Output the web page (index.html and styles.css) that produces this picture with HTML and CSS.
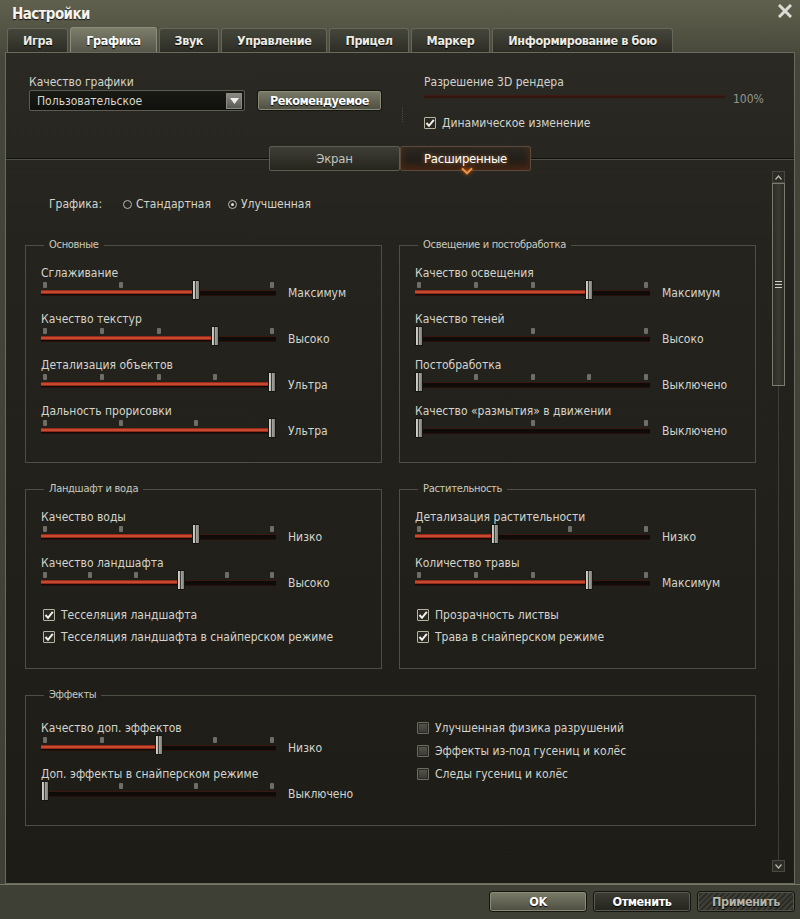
FILE: index.html
```html
<!DOCTYPE html>
<html lang="ru">
<head>
    <meta charset="UTF-8">
    <title>Настройки</title>
    <link rel="stylesheet" href="styles.css">
</head>
<body>
<div class="window">
    <header class="titlebar">
        <h1>Настройки</h1>
        <button class="close" title="Закрыть">
            <svg width="14" height="14" viewBox="0 0 14 14"><path d="M2 2 L12 12 M12 2 L2 12" stroke="#dcdcd4" stroke-width="3" stroke-linecap="square"/></svg>
        </button>
    </header>

    <nav class="tabs">
        <a class="tab">Игра</a>
        <a class="tab active">Графика</a>
        <a class="tab">Звук</a>
        <a class="tab">Управление</a>
        <a class="tab">Прицел</a>
        <a class="tab">Маркер</a>
        <a class="tab">Информирование в бою</a>
    </nav>

    <main class="panel">
        <section class="quality">
            <div class="quality-left">
                <div class="caption">Качество графики</div>
                <div class="quality-controls">
                    <div class="select">
                        <span>Пользовательское</span>
                        <span class="select-arrow">
                            <svg width="9" height="6" viewBox="0 0 9 6"><path d="M0 0 H9 L4.5 6 Z" fill="#f0f0ea"/></svg>
                        </span>
                    </div>
                    <button class="btn">Рекомендуемое</button>
                </div>
            </div>
            <div class="divider"></div>
            <div class="quality-right">
                <div class="caption">Разрешение 3D рендера</div>
                <div class="render-row">
                    <div class="render-track"></div>
                    <span class="render-value">100%</span>
                </div>
                <label class="check checked"><span class="box"><svg width="10" height="10" viewBox="0 0 10 10"><path d="M1.5 5 L4 7.8 L8.8 1.8" fill="none" stroke="#f2f2ec" stroke-width="2"/></svg></span>Динамическое изменение</label>
            </div>
        </section>

        <div class="subtabs">
            <span class="subtab-line"></span>
            <a class="subtab">Экран</a>
            <a class="subtab active">Расширенные</a>
            <span class="subtab-line"></span>
        </div>

        <div class="scroll">
            <div class="scroll-content">
                <div class="mode">
                    <span class="mode-title">Графика:</span>
                    <label class="radio"><span class="dot"></span>Стандартная</label>
                    <label class="radio checked"><span class="dot"></span>Улучшенная</label>
                </div>

                <div class="groups">
                    <fieldset class="group">
                        <legend>Основные</legend>
                        <div class="setting">
                            <div class="setting-label">Сглаживание</div>
                            <div class="setting-row">
                                <div class="slider"><div class="rail">
                                    <i class="tick" style="left:0%"></i><i class="tick" style="left:33.33%"></i><i class="tick" style="left:66.67%"></i><i class="tick" style="left:100%"></i>
                                    <i class="fill" style="width:calc(66.67% + 4px)"></i>
                                    <i class="thumb" style="left:66.67%"></i>
                                </div></div>
                                <span class="setting-value">Максимум</span>
                            </div>
                        </div>
                        <div class="setting">
                            <div class="setting-label">Качество текстур</div>
                            <div class="setting-row">
                                <div class="slider"><div class="rail">
                                    <i class="tick" style="left:0%"></i><i class="tick" style="left:25%"></i><i class="tick" style="left:50%"></i><i class="tick" style="left:75%"></i><i class="tick" style="left:100%"></i>
                                    <i class="fill" style="width:calc(75% + 4px)"></i>
                                    <i class="thumb" style="left:75%"></i>
                                </div></div>
                                <span class="setting-value">Высоко</span>
                            </div>
                        </div>
                        <div class="setting">
                            <div class="setting-label">Детализация объектов</div>
                            <div class="setting-row">
                                <div class="slider"><div class="rail">
                                    <i class="tick" style="left:0%"></i><i class="tick" style="left:25%"></i><i class="tick" style="left:50%"></i><i class="tick" style="left:75%"></i><i class="tick" style="left:100%"></i>
                                    <i class="fill" style="width:calc(100% + 4px)"></i>
                                    <i class="thumb" style="left:100%"></i>
                                </div></div>
                                <span class="setting-value">Ультра</span>
                            </div>
                        </div>
                        <div class="setting">
                            <div class="setting-label">Дальность прорисовки</div>
                            <div class="setting-row">
                                <div class="slider"><div class="rail">
                                    <i class="tick" style="left:0%"></i><i class="tick" style="left:33.33%"></i><i class="tick" style="left:66.67%"></i><i class="tick" style="left:100%"></i>
                                    <i class="fill" style="width:calc(100% + 4px)"></i>
                                    <i class="thumb" style="left:100%"></i>
                                </div></div>
                                <span class="setting-value">Ультра</span>
                            </div>
                        </div>
                    </fieldset>

                    <fieldset class="group">
                        <legend>Освещение и постобработка</legend>
                        <div class="setting">
                            <div class="setting-label">Качество освещения</div>
                            <div class="setting-row">
                                <div class="slider"><div class="rail">
                                    <i class="tick" style="left:0%"></i><i class="tick" style="left:25%"></i><i class="tick" style="left:50%"></i><i class="tick" style="left:75%"></i><i class="tick" style="left:100%"></i>
                                    <i class="fill" style="width:calc(75% + 4px)"></i>
                                    <i class="thumb" style="left:75%"></i>
                                </div></div>
                                <span class="setting-value">Максимум</span>
                            </div>
                        </div>
                        <div class="setting">
                            <div class="setting-label">Качество теней</div>
                            <div class="setting-row">
                                <div class="slider"><div class="rail">
                                    <i class="tick" style="left:0%"></i><i class="tick" style="left:50%"></i><i class="tick" style="left:100%"></i>
                                    <i class="thumb" style="left:0%"></i>
                                </div></div>
                                <span class="setting-value">Высоко</span>
                            </div>
                        </div>
                        <div class="setting">
                            <div class="setting-label">Постобработка</div>
                            <div class="setting-row">
                                <div class="slider"><div class="rail">
                                    <i class="tick" style="left:0%"></i><i class="tick" style="left:25%"></i><i class="tick" style="left:50%"></i><i class="tick" style="left:75%"></i><i class="tick" style="left:100%"></i>
                                    <i class="thumb" style="left:0%"></i>
                                </div></div>
                                <span class="setting-value">Выключено</span>
                            </div>
                        </div>
                        <div class="setting">
                            <div class="setting-label">Качество «размытия» в движении</div>
                            <div class="setting-row">
                                <div class="slider"><div class="rail">
                                    <i class="tick" style="left:0%"></i><i class="tick" style="left:50%"></i><i class="tick" style="left:100%"></i>
                                    <i class="thumb" style="left:0%"></i>
                                </div></div>
                                <span class="setting-value">Выключено</span>
                            </div>
                        </div>
                    </fieldset>

                    <fieldset class="group">
                        <legend>Ландшафт и вода</legend>
                        <div class="setting">
                            <div class="setting-label">Качество воды</div>
                            <div class="setting-row">
                                <div class="slider"><div class="rail">
                                    <i class="tick" style="left:0%"></i><i class="tick" style="left:33.33%"></i><i class="tick" style="left:66.67%"></i><i class="tick" style="left:100%"></i>
                                    <i class="fill" style="width:calc(66.67% + 4px)"></i>
                                    <i class="thumb" style="left:66.67%"></i>
                                </div></div>
                                <span class="setting-value">Низко</span>
                            </div>
                        </div>
                        <div class="setting">
                            <div class="setting-label">Качество ландшафта</div>
                            <div class="setting-row">
                                <div class="slider"><div class="rail">
                                    <i class="tick" style="left:0%"></i><i class="tick" style="left:20%"></i><i class="tick" style="left:40%"></i><i class="tick" style="left:60%"></i><i class="tick" style="left:80%"></i><i class="tick" style="left:100%"></i>
                                    <i class="fill" style="width:calc(60% + 4px)"></i>
                                    <i class="thumb" style="left:60%"></i>
                                </div></div>
                                <span class="setting-value">Высоко</span>
                            </div>
                        </div>
                        <div class="checks">
                            <label class="check checked"><span class="box"><svg width="10" height="10" viewBox="0 0 10 10"><path d="M1.5 5 L4 7.8 L8.8 1.8" fill="none" stroke="#f2f2ec" stroke-width="2"/></svg></span>Тесселяция ландшафта</label>
                            <label class="check checked"><span class="box"><svg width="10" height="10" viewBox="0 0 10 10"><path d="M1.5 5 L4 7.8 L8.8 1.8" fill="none" stroke="#f2f2ec" stroke-width="2"/></svg></span>Тесселяция ландшафта в снайперском режиме</label>
                        </div>
                    </fieldset>

                    <fieldset class="group">
                        <legend>Растительность</legend>
                        <div class="setting">
                            <div class="setting-label">Детализация растительности</div>
                            <div class="setting-row">
                                <div class="slider"><div class="rail">
                                    <i class="tick" style="left:0%"></i><i class="tick" style="left:33.33%"></i><i class="tick" style="left:66.67%"></i><i class="tick" style="left:100%"></i>
                                    <i class="fill" style="width:calc(33.33% + 4px)"></i>
                                    <i class="thumb" style="left:33.33%"></i>
                                </div></div>
                                <span class="setting-value">Низко</span>
                            </div>
                        </div>
                        <div class="setting">
                            <div class="setting-label">Количество травы</div>
                            <div class="setting-row">
                                <div class="slider"><div class="rail">
                                    <i class="tick" style="left:0%"></i><i class="tick" style="left:25%"></i><i class="tick" style="left:50%"></i><i class="tick" style="left:75%"></i><i class="tick" style="left:100%"></i>
                                    <i class="fill" style="width:calc(75% + 4px)"></i>
                                    <i class="thumb" style="left:75%"></i>
                                </div></div>
                                <span class="setting-value">Максимум</span>
                            </div>
                        </div>
                        <div class="checks">
                            <label class="check checked"><span class="box"><svg width="10" height="10" viewBox="0 0 10 10"><path d="M1.5 5 L4 7.8 L8.8 1.8" fill="none" stroke="#f2f2ec" stroke-width="2"/></svg></span>Прозрачность листвы</label>
                            <label class="check checked"><span class="box"><svg width="10" height="10" viewBox="0 0 10 10"><path d="M1.5 5 L4 7.8 L8.8 1.8" fill="none" stroke="#f2f2ec" stroke-width="2"/></svg></span>Трава в снайперском режиме</label>
                        </div>
                    </fieldset>

                    <fieldset class="group wide">
                        <legend>Эффекты</legend>
                        <div class="effects">
                            <div>
                                <div class="setting">
                                    <div class="setting-label">Качество доп. эффектов</div>
                                    <div class="setting-row">
                                        <div class="slider"><div class="rail">
                                            <i class="tick" style="left:0%"></i><i class="tick" style="left:25%"></i><i class="tick" style="left:50%"></i><i class="tick" style="left:75%"></i><i class="tick" style="left:100%"></i>
                                            <i class="fill" style="width:calc(50% + 4px)"></i>
                                            <i class="thumb" style="left:50%"></i>
                                        </div></div>
                                        <span class="setting-value">Низко</span>
                                    </div>
                                </div>
                                <div class="setting">
                                    <div class="setting-label">Доп. эффекты в снайперском режиме</div>
                                    <div class="setting-row">
                                        <div class="slider"><div class="rail">
                                            <i class="tick" style="left:0%"></i><i class="tick" style="left:33.33%"></i><i class="tick" style="left:66.67%"></i><i class="tick" style="left:100%"></i>
                                            <i class="thumb" style="left:0%"></i>
                                        </div></div>
                                        <span class="setting-value">Выключено</span>
                                    </div>
                                </div>
                            </div>
                            <div class="effects-checks">
                                <label class="check"><span class="box"></span>Улучшенная физика разрушений</label>
                                <label class="check"><span class="box"></span>Эффекты из-под гусениц и колёс</label>
                                <label class="check"><span class="box"></span>Следы гусениц и колёс</label>
                            </div>
                        </div>
                    </fieldset>
                </div>
            </div>

            <div class="scrollbar">
                <span class="scroll-btn"><svg width="7" height="5" viewBox="0 0 7 5"><path d="M0.5 4.5 L3.5 1 L6.5 4.5" fill="none" stroke="#b8b8b0" stroke-width="1.2"/></svg></span>
                <span class="scroll-thumb"><i></i><i></i><i></i></span>
                <span class="scroll-rail"></span>
                <span class="scroll-btn"><svg width="7" height="5" viewBox="0 0 7 5"><path d="M0.5 0.5 L3.5 4 L6.5 0.5" fill="none" stroke="#b8b8b0" stroke-width="1.2"/></svg></span>
            </div>
        </div>
    </main>

    <footer class="footer">
        <button class="btn">OK</button>
        <button class="btn dark">Отменить</button>
        <button class="btn disabled">Применить</button>
    </footer>
</div>
</body>
</html>
```

FILE: styles.css
```css
* {
    box-sizing: border-box;
}
body {
    margin: 0;
    width: 800px;
    height: 919px;
    overflow: hidden;
    background: #3f3f34;
    font-family: "DejaVu Sans Condensed", "DejaVu Sans", sans-serif;
    font-size: 12px;
    color: #d4d4cc;
}
.window {
    height: 919px;
    display: flex;
    flex-direction: column;
    background: linear-gradient(to bottom, #5f604d 0, #535443 30px, #45463a 60px, #3f4035 100%);
}

/* title + tabs */
.titlebar {
    height: 27px;
    display: flex;
    align-items: center;
    justify-content: space-between;
    padding: 0 8px 0 12px;
}
.titlebar h1 {
    margin: 0;
    font-family: "DejaVu Sans Condensed", sans-serif;
    font-weight: bold;
    font-size: 15px;
    letter-spacing: -0.6px;
    color: #f4f4ee;
    text-shadow: 0 1px 1px #111;
}
.close {
    width: 14px;
    height: 14px;
    padding: 0;
    border: none;
    background: none;
    margin-top: -6px;
}
.tabs {
    height: 25px;
    display: flex;
    align-items: flex-end;
    gap: 2px;
    padding-left: 7px;
}
.tab {
    height: 24px;
    padding: 0 15px;
    display: flex;
    align-items: center;
    font-family: "DejaVu Sans Condensed", sans-serif;
    font-weight: bold;
    font-size: 12.5px;
    letter-spacing: -0.4px;
    white-space: nowrap;
    color: #ececE4;
    text-shadow: 0 1px 1px #000;
    border: 1px solid #66675a;
    border-bottom: none;
    border-radius: 3px 3px 0 0;
    background: linear-gradient(to bottom, #45463b, #2d2d26);
}
.tab.active {
    height: 25px;
    color: #fff;
    border-color: #8c8d7a;
    background: linear-gradient(to bottom, #7d7e6a, #55564a);
}

/* main panel */
.panel {
    margin: 0 5px;
    height: 832px;
    display: flex;
    flex-direction: column;
    border: 1px solid #6a6b5c;
    background: linear-gradient(to bottom, #2a2923, #24231d 200px, #1d1c17 100%);
}
.quality {
    height: 93px;
    display: flex;
    padding-top: 22px;
}
.quality-left {
    width: 396px;
    padding-left: 23px;
}
.caption {
    line-height: 14px;
}
.quality-controls {
    display: flex;
    gap: 12px;
    margin-top: 1px;
}
.select {
    width: 216px;
    height: 21px;
    display: flex;
    align-items: center;
    justify-content: space-between;
    padding: 0 2px 0 7px;
    border: 1px solid #5c5c52;
    border-radius: 2px;
    background: linear-gradient(to bottom, #1a1a15, #0f0f0c);
    color: #d8d8d0;
}
.select-arrow {
    width: 16px;
    height: 16px;
    display: flex;
    align-items: center;
    justify-content: center;
    border: 1px solid #8a8a80;
    background: linear-gradient(to bottom, #8b8b84, #5a5a54);
}
.btn {
    height: 21px;
    padding: 0;
    width: 125px;
    font-family: "DejaVu Sans Condensed", sans-serif;
    font-weight: bold;
    font-size: 12.5px;
    letter-spacing: -0.4px;
    color: #fff;
    text-shadow: 0 1px 1px #000;
    border: 1px solid #15150f;
    border-radius: 3px;
    box-shadow: inset 0 0 0 1px #8b8c78;
    background: linear-gradient(to bottom, #7a7b67, #4d4e41);
}
.divider {
    width: 1px;
    margin: 32px 0 24px;
    border-left: 1px dotted #4a4a40;
}
.quality-right {
    padding-left: 21px;
}
.render-row {
    display: flex;
    align-items: center;
    height: 16px;
}
.render-track {
    width: 301px;
    height: 3px;
    margin-top: -1px;
    background: #33140f;
    border-top: 1px solid #3f1a14;
}
.render-value {
    margin-left: 8px;
    margin-top: 3px;
    color: #96968e;
}

/* checkboxes and radios */
.check {
    display: flex;
    align-items: center;
    gap: 6px;
    line-height: 14px;
    margin-top: 11px;
}
.box {
    width: 12px;
    height: 12px;
    display: flex;
    align-items: center;
    justify-content: center;
    border: 1px solid #6c6c62;
    border-radius: 1px;
    background: linear-gradient(to bottom, #55554e, #3a3a34);
    box-shadow: inset 0 0 0 1px #2a2a25;
}
.check.checked .box {
    border-color: #b8b4a0;
    background: #2a2822;
    box-shadow: none;
}
.mode {
    display: flex;
    align-items: center;
    height: 16px;
    margin-left: 24px;
}
.mode-title {
    width: 74px;
}
.radio {
    display: flex;
    align-items: center;
    gap: 4px;
    margin-right: 17px;
}
.dot {
    width: 9px;
    height: 9px;
    border: 1px solid #b8b8b0;
    border-radius: 50%;
    display: flex;
    align-items: center;
    justify-content: center;
}
.radio.checked .dot::after {
    content: "";
    width: 3px;
    height: 3px;
    border-radius: 50%;
    background: #e0e0d8;
}

/* sub tabs */
.subtabs {
    height: 25px;
    display: flex;
    align-items: center;
}
.subtab-line {
    flex: 1;
    height: 2px;
    border-top: 1px solid #0f0f0c;
    border-bottom: 1px solid #4f5044;
}
.subtab {
    width: 131px;
    height: 25px;
    display: flex;
    align-items: center;
    justify-content: center;
    font-family: "DejaVu Sans Condensed", sans-serif;
    font-size: 13px;
    letter-spacing: -0.2px;
    color: #c4c4bc;
    border: 1px solid #5d5e52;
    border-radius: 2px;
    background: linear-gradient(to bottom, #3e3e36, #26261f);
}
.subtab.active {
    position: relative;
    color: #fff;
    text-shadow: 0 0 4px rgba(255, 170, 90, 0.6);
    border-color: #5a4a3c;
    background: linear-gradient(to bottom, #2b2822, #1b1813);
    box-shadow: inset 0 -4px 8px rgba(170, 70, 20, 0.35);
}
.subtab.active::after {
    content: "";
    position: absolute;
    left: 62px;
    bottom: -3px;
    width: 6px;
    height: 6px;
    border-right: 2px solid #f09040;
    border-bottom: 2px solid #f09040;
    transform: rotate(45deg);
    filter: drop-shadow(0 0 2px #e06010);
}

/* scroll area */
.scroll {
    flex: 1;
    display: flex;
}
.scroll-content {
    flex: 1;
    padding: 25px 0 0 19px;
}
.groups {
    display: grid;
    grid-template-columns: 357px 357px;
    column-gap: 17px;
    row-gap: 19px;
    margin-top: 26px;
}
.group {
    margin: 0;
    padding: 14px 0 24px 15px;
    border: 1px solid #4e4f44;
    min-width: 0;
}
.group.wide {
    grid-column: span 2;
    padding-top: 19px;
}
.group legend {
    margin-left: 3px;
    padding: 0 5px;
    font-family: "DejaVu Sans Condensed", sans-serif;
    font-size: 11px;
    letter-spacing: -0.3px;
    line-height: 14px;
    color: #cacabe;
}
.setting + .setting {
    margin-top: 12px;
}
.setting-label {
    line-height: 14px;
    white-space: nowrap;
}
.setting-row {
    display: flex;
    align-items: center;
}
.setting-value {
    margin-left: 12px;
    padding-top: 5px;
}
.slider {
    position: relative;
    width: 235px;
    height: 20px;
}
.slider::before {
    content: "";
    position: absolute;
    left: 0;
    right: 0;
    top: 10px;
    height: 4px;
    background: #0e0b09;
    border-top: 1px solid #3a1711;
    border-bottom: 1px solid #26100c;
}
.rail {
    position: absolute;
    left: 0;
    top: 0;
    bottom: 0;
    right: 8px;
}
.tick {
    position: absolute;
    top: 2px;
    width: 4px;
    height: 6px;
    margin-left: 2px;
    border-radius: 1px;
    background: #6e6e66;
}
.fill {
    position: absolute;
    left: 0;
    top: 10px;
    height: 4px;
    background: linear-gradient(to bottom, #7a1c10, #e0583a 50%, #7a1c10);
}
.thumb {
    position: absolute;
    top: 0;
    width: 8px;
    height: 20px;
    border: 1px solid #141411;
    border-radius: 1px;
    background: linear-gradient(to right, #d8d8d0 0, #b4b4ac 2px, #3c3c36 2px, #3c3c36 3px, #a8a8a0 3px, #7c7c74 100%);
}
.checks {
    margin-top: 18px;
}
.checks .check {
    margin-left: 2px;
    margin-top: 8px;
}
.checks .check:first-child {
    margin-top: 0;
}
.effects {
    display: grid;
    grid-template-columns: 376px 1fr;
}
.effects-checks .check {
    margin-top: 0;
    margin-bottom: 9px;
}

/* scrollbar */
.scrollbar {
    width: 13px;
    margin: 0 9px 11px 0;
    display: flex;
    flex-direction: column;
    align-items: center;
}
.scroll-btn {
    width: 13px;
    height: 12px;
    display: flex;
    align-items: center;
    justify-content: center;
    border: 1px solid #4a4a42;
    background: #2c2c26;
}
.scroll-thumb {
    width: 13px;
    height: 203px;
    display: flex;
    flex-direction: column;
    align-items: center;
    justify-content: center;
    gap: 2px;
    border: 1px solid #7a7a6e;
    background: linear-gradient(to right, #2c2c25, #3a3a31 50%, #2c2c25);
}
.scroll-thumb i {
    width: 7px;
    height: 1px;
    background: #d0d0c8;
}
.scroll-rail {
    flex: 1;
    width: 1px;
    background: #3e3e36;
}

/* footer */
.footer {
    flex: 1;
    display: flex;
    justify-content: flex-end;
    gap: 6px;
    padding: 6px 5px 0 0;
    border-top: 1px solid #77786a;
}
.footer .btn {
    width: 98px;
}
.btn.dark {
    box-shadow: inset 0 0 0 1px #5a5a50;
    background: linear-gradient(to bottom, #3c3c34, #24241e);
}
.btn.disabled {
    color: #b4b4ac;
    box-shadow: inset 0 0 0 1px #55554c;
    background: repeating-linear-gradient(135deg, #403f37 0, #403f37 2px, #2c2c26 2px, #2c2c26 4px);
}
```
